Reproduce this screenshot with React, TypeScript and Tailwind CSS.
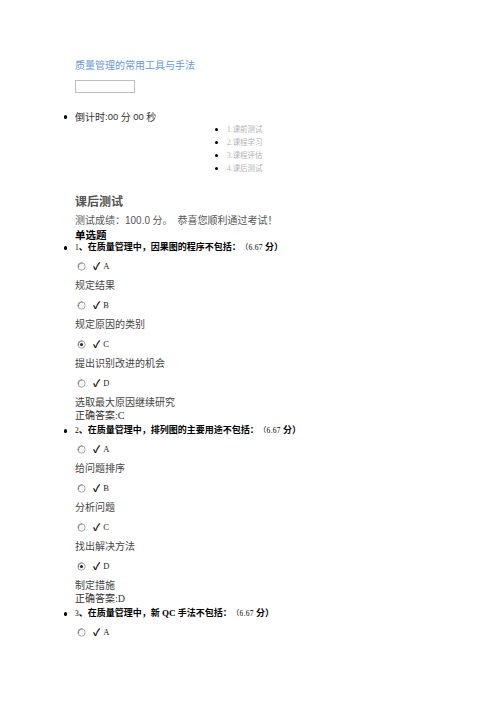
const serif = "font-['Liberation_Serif','Noto_Sans_CJK_SC',serif]";

type Question = {
  n: string;
  text: string;
  options: string[];
  checked: number;
  answer?: string;
};

const questions: Question[] = [
  {
    n: "1",
    text: "在质量管理中，因果图的程序不包括：",
    options: ["规定结果", "规定原因的类别", "提出识别改进的机会", "选取最大原因继续研究"],
    checked: 2,
    answer: "C",
  },
  {
    n: "2",
    text: "在质量管理中，排列图的主要用途不包括：",
    options: ["给问题排序", "分析问题", "找出解决方法", "制定措施"],
    checked: 3,
    answer: "D",
  },
  {
    n: "3",
    text: "在质量管理中，新 QC 手法不包括：",
    options: [""],
    checked: -1,
  },
];

const letters = ["A", "B", "C", "D"];

function Dot() {
  return <span className="mr-[8px] inline-block h-[3.5px] w-[3.5px] shrink-0 rounded-full bg-black" />;
}

function Radio({ checked }: { checked?: boolean }) {
  return (
    <svg width="9" height="9" viewBox="0 0 9 9">
      <circle cx="4.5" cy="4.5" r="3.7" fill="#f6f6f6" stroke="#a0a0a0" strokeWidth="0.9" />
      <path d="M1.6 5.6A3.7 3.7 0 0 1 5.6 0.9" stroke="#7a7a7a" strokeWidth="0.9" fill="none" />
      {checked && <circle cx="4.5" cy="4.5" r="1.5" fill="#222" />}
    </svg>
  );
}

function QuestionBlock({ q }: { q: Question }) {
  return (
    <div>
      <div className="-ml-[11.5px] flex h-[12px] items-center text-[9px] font-bold text-black">
        <Dot />
        <span className="font-normal text-[7.5px]">{q.n}</span>
        <span>、{q.text}</span>
        <span className="font-normal text-[7.5px] tracking-[0.3px]">（6.67&nbsp;</span>
        <span>分）</span>
      </div>
      <div className="mt-[3px]">
        {q.options.map((opt, i) => {
          const last = i === q.options.length - 1;
          return (
            <div key={i}>
              <div className="flex h-[19px] items-center">
                <span className="ml-[2px] w-[16px]">
                  <Radio checked={i === q.checked} />
                </span>
                <span className="text-[10px] font-bold text-black">✓</span>
                <span className="ml-[3px] text-[8.5px] text-[#222]">{letters[i]}</span>
              </div>
              {opt && (
                <div
                  className={`${last ? "h-[17px]" : "h-[20px]"} pt-[1px] text-[10px] leading-[18px] text-[#444]`}
                >
                  {opt}
                </div>
              )}
            </div>
          );
        })}
        {q.answer && (
          <div className="h-[12px] text-[10px] leading-[12px] text-[#333]">正确答案:{q.answer}</div>
        )}
      </div>
    </div>
  );
}

export default function App() {
  const nav = ["1.课前测试", "2.课程学习", "3.课程评估", "4.课后测试"];
  return (
    <div className={`min-h-[702px] w-[496px] bg-white pl-[75px] pt-[60px] ${serif}`}>
      <div className="h-[12px] text-[10px] leading-[12px] text-[#6a9ad4]">质量管理的常用工具与手法</div>
      <div className="mt-[8px] h-[13px] w-[60px] border border-[#bdbdbd]" />

      <div className="-ml-[11.5px] mt-[18px] flex h-[12px] items-center text-[10px] text-[#333]">
        <Dot />
        <span>倒计时</span>
        <span className="font-['Liberation_Sans',sans-serif] text-[9.5px]">:00</span>
        <span>&nbsp;分&nbsp;</span>
        <span className="font-['Liberation_Sans',sans-serif] text-[9.5px]">00</span>
        <span>&nbsp;秒</span>
      </div>

      <div className="ml-[140px]">
        {nav.map((t) => (
          <div key={t} className="flex h-[13px] items-center text-[7.5px] text-[#b4b4b4]">
            <span className="mr-[9px] inline-block h-[3px] w-[3px] rounded-full bg-black" />
            {t}
          </div>
        ))}
      </div>

      <div className="mt-[19px] h-[16px] text-[12px] font-bold leading-[16px] text-[#555]">课后测试</div>
      <div className="mt-[4px] h-[14px] text-[10px] leading-[14px] text-[#555]">
        测试成绩：<span className="font-['Liberation_Sans',sans-serif]">100.0</span> 分。&nbsp;&nbsp;恭喜您顺利通过考试！
      </div>
      <div className="mt-[1px] h-[13px] text-[10.5px] font-bold leading-[13px] text-black">单选题</div>

      {questions.map((q, i) => (
        <div key={q.n} className={i > 0 ? "mt-[3px]" : ""}>
          <QuestionBlock q={q} />
        </div>
      ))}
    </div>
  );
}
